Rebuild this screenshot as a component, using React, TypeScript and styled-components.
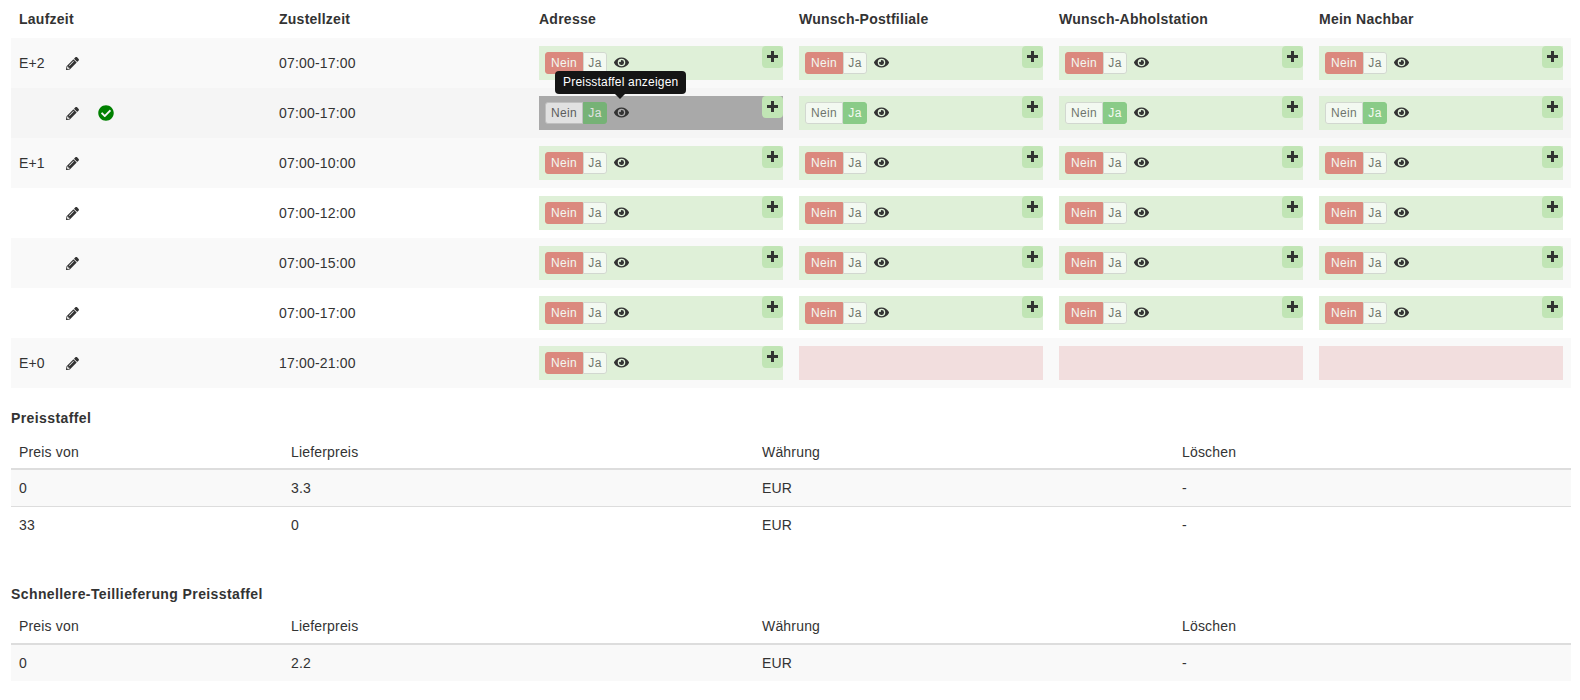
import React from 'react';
import styled, { createGlobalStyle } from 'styled-components';
import { FaPencilAlt, FaEye, FaCheckCircle } from 'react-icons/fa';

const GlobalStyle = createGlobalStyle`
  html, body {
    margin: 0;
    background: #fff;
    color: #333;
    font-family: "Liberation Sans", Arial, sans-serif;
    font-size: 14px;
    line-height: 20px;
    letter-spacing: 0.18px;
  }
`;

const Page = styled.div`
  width: 1560px;
  padding: 0 11px;
`;

const Table = styled.table`
  width: 100%;
  border-collapse: collapse;
  border-spacing: 0;
  table-layout: fixed;
`;

const HeadCell = styled.th`
  height: 38px;
  padding: 0 8px;
  box-sizing: border-box;
  text-align: left;
  font-weight: bold;
  letter-spacing: 0.25px;
`;

const Row = styled.tr<{ $stripe?: boolean; $hover?: boolean }>`
  background: ${(p) => (p.$hover ? '#f5f5f5' : p.$stripe ? '#f9f9f9' : '#fff')};
`;

const Cell = styled.td`
  height: 50px;
  padding: 8px;
  box-sizing: border-box;
  vertical-align: middle;
`;

const RunCell = styled.div`
  display: flex;
  align-items: center;
  height: 20px;
`;

const RunLabel = styled.span`
  width: 47px;
`;

const PencilIcon = styled(FaPencilAlt)`
  width: 13px;
  height: 13px;
  color: #333;
`;

const CheckIcon = styled(FaCheckCircle)`
  width: 16px;
  height: 16px;
  margin-left: 19px;
  color: green;
`;

const Slot = styled.div<{ $active?: boolean }>`
  position: relative;
  display: flex;
  align-items: center;
  height: 34px;
  padding-left: 6px;
  box-sizing: border-box;
  background: ${(p) => (p.$active ? '#a9a9a9' : '#dff0d8')};
`;

const EmptySlot = styled.div`
  height: 34px;
  background: #f2dede;
`;

const Toggle = styled.div`
  display: flex;
  height: 22px;
  font-size: 12px;
  line-height: 20px;
  letter-spacing: 0.3px;
  opacity: 0.65;
`;

const ToggleOption = styled.span<{ $tone: 'off' | 'red' | 'green' }>`
  box-sizing: border-box;
  border: 1px solid ${(p) => (p.$tone === 'off' ? '#ccc' : p.$tone === 'red' ? '#d9534f' : '#5cb85c')};
  background: ${(p) => (p.$tone === 'off' ? '#fff' : p.$tone === 'red' ? '#d9534f' : '#5cb85c')};
  color: ${(p) => (p.$tone === 'off' ? '#333' : '#fff')};
  text-align: center;
`;

const NeinOption = styled(ToggleOption)`
  width: 38px;
  border-radius: 3px 0 0 3px;
`;

const JaOption = styled(ToggleOption)`
  width: 24px;
  border-radius: 0 3px 3px 0;
`;

const EyeIcon = styled(FaEye)`
  width: 15px;
  height: 15px;
  margin: 0 0 2px 7px;
  color: #333;
`;

const AddButton = styled.span`
  position: absolute;
  top: 0;
  right: 0;
  width: 21px;
  height: 22px;
  display: flex;
  align-items: center;
  justify-content: center;
  padding-bottom: 1px;
  box-sizing: border-box;
  border-radius: 4px;
  background: #c1e5b5;
  color: #333;
`;

const PlusIcon: React.FC = () => (
  <svg width="11" height="11" viewBox="0 0 11 11" fill="currentColor">
    <path d="M4 0h3v4h4v3H7v4H4V7H0V4h4z" />
  </svg>
);

const Tooltip = styled.div`
  position: absolute;
  top: -25px;
  left: 16px;
  z-index: 2;
  padding: 3px 8px;
  border-radius: 4px;
  background: #151515;
  color: #fff;
  font-size: 12px;
  line-height: 17px;
  letter-spacing: 0.2px;
  white-space: nowrap;

  &::after {
    content: '';
    position: absolute;
    left: 60px;
    bottom: -5px;
    border-style: solid;
    border-width: 5px 5px 0;
    border-color: #151515 transparent transparent;
  }
`;

const SectionTitle = styled.h4<{ $top: number; $gap: number }>`
  margin: ${(p) => p.$top}px 0 ${(p) => p.$gap}px;
  font-size: 14px;
  line-height: 20px;
  font-weight: bold;
  letter-spacing: 0.4px;
`;

const PriceHead = styled.th`
  height: 37px;
  padding: 9px 8px 6px;
  box-sizing: border-box;
  text-align: left;
  font-weight: normal;
  border-bottom: 2px solid #ddd;
`;

const PriceRow = styled.tr<{ $stripe?: boolean }>`
  background: ${(p) => (p.$stripe ? '#f9f9f9' : '#fff')};
`;

const PriceCell = styled.td`
  height: 37px;
  padding: 8px;
  box-sizing: border-box;
  border-top: 1px solid #ddd;
`;

type SlotState = 'nein' | 'ja' | 'active' | 'none';

const slotColumns = ['Adresse', 'Wunsch-Postfiliale', 'Wunsch-Abholstation', 'Mein Nachbar'];

const rows: { run: string; time: string; check?: boolean; slots: SlotState[] }[] = [
  { run: 'E+2', time: '07:00-17:00', slots: ['nein', 'nein', 'nein', 'nein'] },
  { run: '', time: '07:00-17:00', check: true, slots: ['active', 'ja', 'ja', 'ja'] },
  { run: 'E+1', time: '07:00-10:00', slots: ['nein', 'nein', 'nein', 'nein'] },
  { run: '', time: '07:00-12:00', slots: ['nein', 'nein', 'nein', 'nein'] },
  { run: '', time: '07:00-15:00', slots: ['nein', 'nein', 'nein', 'nein'] },
  { run: '', time: '07:00-17:00', slots: ['nein', 'nein', 'nein', 'nein'] },
  { run: 'E+0', time: '17:00-21:00', slots: ['nein', 'none', 'none', 'none'] },
];

const SlotBox: React.FC<{ state: SlotState }> = ({ state }) => {
  if (state === 'none') return <EmptySlot />;
  const active = state === 'active';
  const isNein = state === 'nein';
  return (
    <Slot $active={active}>
      {active && <Tooltip>Preisstaffel anzeigen</Tooltip>}
      <Toggle>
        <NeinOption $tone={isNein ? 'red' : 'off'}>Nein</NeinOption>
        <JaOption $tone={isNein ? 'off' : 'green'}>Ja</JaOption>
      </Toggle>
      <EyeIcon />
      <AddButton>
        <PlusIcon />
      </AddButton>
    </Slot>
  );
};

const PriceTable: React.FC<{ data: string[][] }> = ({ data }) => (
  <Table>
    <colgroup>
      <col width={272} />
      <col width={471} />
      <col width={420} />
      <col />
    </colgroup>
    <thead>
      <tr>
        <PriceHead>Preis von</PriceHead>
        <PriceHead>Lieferpreis</PriceHead>
        <PriceHead>Währung</PriceHead>
        <PriceHead>Löschen</PriceHead>
      </tr>
    </thead>
    <tbody>
      {data.map((row, i) => (
        <PriceRow key={i} $stripe={i % 2 === 0}>
          {row.map((value, j) => (
            <PriceCell key={j}>{value}</PriceCell>
          ))}
        </PriceRow>
      ))}
    </tbody>
  </Table>
);

const App: React.FC = () => (
  <Page>
    <GlobalStyle />
    <Table>
      <colgroup>
        <col width={260} />
        <col width={260} />
        <col width={260} />
        <col width={260} />
        <col width={260} />
        <col />
      </colgroup>
      <thead>
        <tr>
          <HeadCell>Laufzeit</HeadCell>
          <HeadCell>Zustellzeit</HeadCell>
          {slotColumns.map((name) => (
            <HeadCell key={name}>{name}</HeadCell>
          ))}
        </tr>
      </thead>
      <tbody>
        {rows.map((row, i) => (
          <Row key={i} $stripe={i % 2 === 0} $hover={i === 1}>
            <Cell>
              <RunCell>
                <RunLabel>{row.run}</RunLabel>
                <PencilIcon />
                {row.check && <CheckIcon />}
              </RunCell>
            </Cell>
            <Cell>{row.time}</Cell>
            {row.slots.map((state, j) => (
              <Cell key={j}>
                <SlotBox state={state} />
              </Cell>
            ))}
          </Row>
        ))}
      </tbody>
    </Table>
    <SectionTitle $top={20} $gap={4}>Preisstaffel</SectionTitle>
    <PriceTable
      data={[
        ['0', '3.3', 'EUR', '-'],
        ['33', '0', 'EUR', '-'],
      ]}
    />
    <SectionTitle $top={40} $gap={3}>Schnellere-Teillieferung Preisstaffel</SectionTitle>
    <PriceTable data={[['0', '2.2', 'EUR', '-']]} />
  </Page>
);

export default App;
